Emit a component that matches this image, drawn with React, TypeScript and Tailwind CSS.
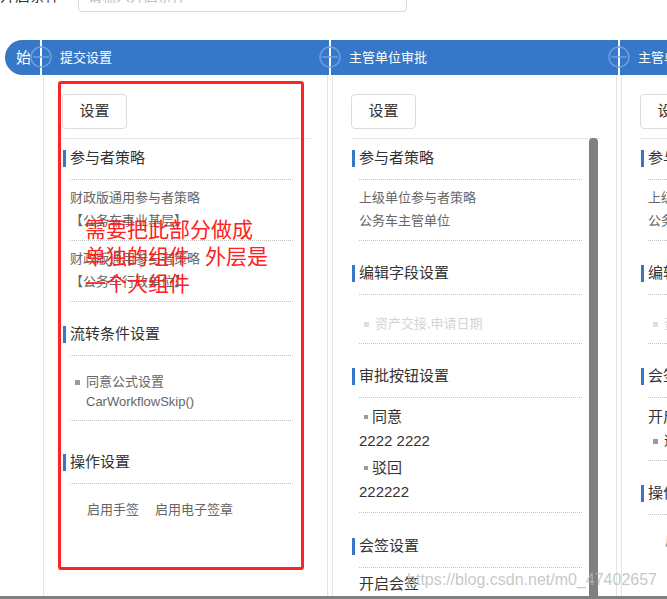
import type { ReactNode } from "react";

function PlusDot() {
  return (
    <svg
      className="absolute -left-[10px] top-[6px]"
      width="22"
      height="22"
      viewBox="0 0 22 22"
    >
      <circle cx="11" cy="11" r="10" fill="none" stroke="#6c9fe2" strokeWidth="1.5" />
      <line x1="3" y1="11" x2="19" y2="11" stroke="#6c9fe2" strokeWidth="1.5" />
    </svg>
  );
}

function FlowColumn({
  title,
  scrollbar,
  children,
}: {
  title: string;
  scrollbar?: boolean;
  children: ReactNode;
}) {
  return (
    <div className="relative flex-none flex flex-col pl-[2px] bg-white">
      <div className="w-[287px] h-[35px] bg-[#3677c8] pl-[18px] text-[13px] leading-[35px] text-white">
        {title}
      </div>
      <PlusDot />
      <div className="flex-1 min-h-0 overflow-hidden mx-[1px] border-x border-[#e3e3e3] pl-[18px] pt-[19px] flex flex-col">
        <button className="w-[65px] h-[35px] flex-none border border-[#dcdcdc] rounded-[4px] bg-white text-[15px] text-[#333]">
          设置
        </button>
        <div className="relative flex-1 mt-[9px] w-[249px] border-t border-[#e6e6e6]">
          <div className="pl-[1px] pr-[18px]">{children}</div>
          {scrollbar && (
            <div className="absolute right-[2px] -top-[1px] bottom-0 w-[9px] bg-[#808080] rounded-t-[4px]" />
          )}
        </div>
      </div>
    </div>
  );
}

function Heading({ children, className = "pt-[22px]" }: { children: ReactNode; className?: string }) {
  return (
    <div className={className}>
      <div className="flex items-center h-[20px] gap-[4px]">
        <span className="w-[3px] h-[17px] bg-[#3677c8]" />
        <span className="text-[15px] leading-[20px] text-[#333]">{children}</span>
      </div>
      <div className="ml-[7px] mt-[11px] border-b border-dotted border-[#c4c4c4]" />
    </div>
  );
}

function Block({ children, className }: { children: ReactNode; className: string }) {
  return <div className={`ml-[7px] border-b border-dotted border-[#c4c4c4] ${className}`}>{children}</div>;
}

function Dot({ light, small }: { light?: boolean; small?: boolean }) {
  if (small) return <span className="flex-none ml-[5px] mr-[4px] w-[4px] h-[4px] bg-[#9a9a9a]" />;
  return (
    <span
      className={
        light
          ? "flex-none ml-[5px] mr-[6px] w-[5px] h-[5px] bg-[#dedede]"
          : "flex-none ml-[5px] mr-[6px] w-[5px] h-[5px] bg-[#9a9a9a]"
      }
    />
  );
}

function Operations() {
  return (
    <div className="ml-[7px] pt-[16px] pl-[17px] flex gap-[16px] text-[13px] leading-[20px] text-[#666]">
      <span>启用手签</span>
      <span>启用电子签章</span>
    </div>
  );
}

export default function App() {
  return (
    <div className="relative flex flex-col h-[599px] w-full overflow-hidden bg-white font-['Liberation_Sans','Noto_Sans_CJK_SC',sans-serif]">
      {/* query row, scrolled mostly out of view */}
      <div className="flex items-center flex-none h-[32px] -mt-[20px]">
        <span className="w-[78px] text-[15px] text-[#333]">开启条件</span>
        <input
          readOnly
          placeholder="请输入开启条件"
          className="w-[329px] h-[32px] border border-[#d9d9d9] rounded-[4px] pl-[9px] text-[14px] outline-none placeholder:text-[#c0c0c0]"
        />
      </div>

      {/* flow */}
      <div className="flex flex-1 min-h-0 mt-[28px] pl-[5px]">
        <div className="flex-none w-[35px] h-[35px] rounded-l-full bg-[#3677c8] pl-[11px] text-[15px] leading-[35px] text-white">
          始
        </div>

        <FlowColumn title="提交设置">
          <Heading className="pt-[9px]">参与者策略</Heading>
          <Block className="pt-[6px] pb-[8px] text-[13px] leading-[23px] text-[#666]">
            <p>财政版通用参与者策略</p>
            <p>【公务车事业基层】</p>
          </Block>
          <Block className="pt-[6px] pb-[8px] text-[13px] leading-[23px] text-[#666]">
            <p>财政版通用参与者策略</p>
            <p>【公务车行政单位】</p>
          </Block>
          <Heading>流转条件设置</Heading>
          <Block className="pt-[16px] pb-[8px] text-[13px] leading-[20px] text-[#666]">
            <div className="flex items-center">
              <Dot />
              同意公式设置
            </div>
            <p className="pl-[16px]">CarWorkflowSkip()</p>
          </Block>
          <Heading className="pt-[31px]">操作设置</Heading>
          <Operations />
        </FlowColumn>

        <FlowColumn title="主管单位审批" scrollbar>
          <Heading className="pt-[9px]">参与者策略</Heading>
          <Block className="pt-[6px] pb-[8px] text-[13px] leading-[23px] text-[#666]">
            <p>上级单位参与者策略</p>
            <p>公务车主管单位</p>
          </Block>
          <Heading>编辑字段设置</Heading>
          <Block className="pt-[19px] pb-[9px] text-[13px] leading-[20px] text-[#d4d4d4]">
            <div className="flex items-center">
              <Dot light />
              资产交接,申请日期
            </div>
          </Block>
          <Heading>审批按钮设置</Heading>
          <Block className="pt-[7px] pb-[8px] text-[15px] leading-[24px] text-[#333]">
            <div className="flex items-center">
              <Dot small />
              同意
            </div>
            <p>2222 2222</p>
            <div className="flex items-center mt-[3px]">
              <Dot small />
              驳回
            </div>
            <p>222222</p>
          </Block>
          <Heading className="pt-[23px]">会签设置</Heading>
          <Block className="pt-[4px] pb-[7px] text-[15px] leading-[24px] text-[#333]">
            <p>开启会签</p>
            <div className="flex items-center text-[13px]">
              <Dot />
              选择会签人员
            </div>
          </Block>
          <Heading>操作设置</Heading>
          <Operations />
        </FlowColumn>

        <FlowColumn title="主管单位会签">
          <Heading className="pt-[9px]">参与者策略</Heading>
          <Block className="pt-[6px] pb-[8px] text-[13px] leading-[23px] text-[#666]">
            <p>上级单位参与者策略</p>
            <p>公务车主管单位</p>
          </Block>
          <Heading>编辑字段设置</Heading>
          <Block className="pt-[19px] pb-[9px] text-[13px] leading-[20px] text-[#d4d4d4]">
            <div className="flex items-center">
              <Dot light />
              资产交接,申请日期
            </div>
          </Block>
          <Heading>会签设置</Heading>
          <Block className="pt-[7px] pb-[7px] text-[15px] leading-[24px] text-[#333]">
            <p>开启会签</p>
            <div className="flex items-center text-[13px]">
              <Dot />
              选择会签人员
            </div>
          </Block>
          <Heading>操作设置</Heading>
          <Operations />
        </FlowColumn>
      </div>

      {/* horizontal scrollbar */}
      <div className="flex-none h-[3px] bg-[#808080]" />

      {/* red annotation drawn over the screenshot */}
      <div className="absolute left-[58px] top-[81px] w-[246px] h-[489px] border-[3px] border-[#ff2424] rounded-[3px] pointer-events-none" />
      <div className="absolute left-[85px] top-[216px] text-[21px] leading-[27px] text-[#ff2020] pointer-events-none">
        <p>需要把此部分做成</p>
        <p>
          单独的组件<span className="inline-block w-[15px]" />外层是
        </p>
        <p>一个大组件</p>
      </div>

      {/* watermark */}
      <div className="absolute right-[10px] bottom-[10px] text-[16px] leading-[18px] text-[rgba(185,185,185,0.8)] pointer-events-none">
        https://blog.csdn.net/m0_47402657
      </div>
    </div>
  );
}
